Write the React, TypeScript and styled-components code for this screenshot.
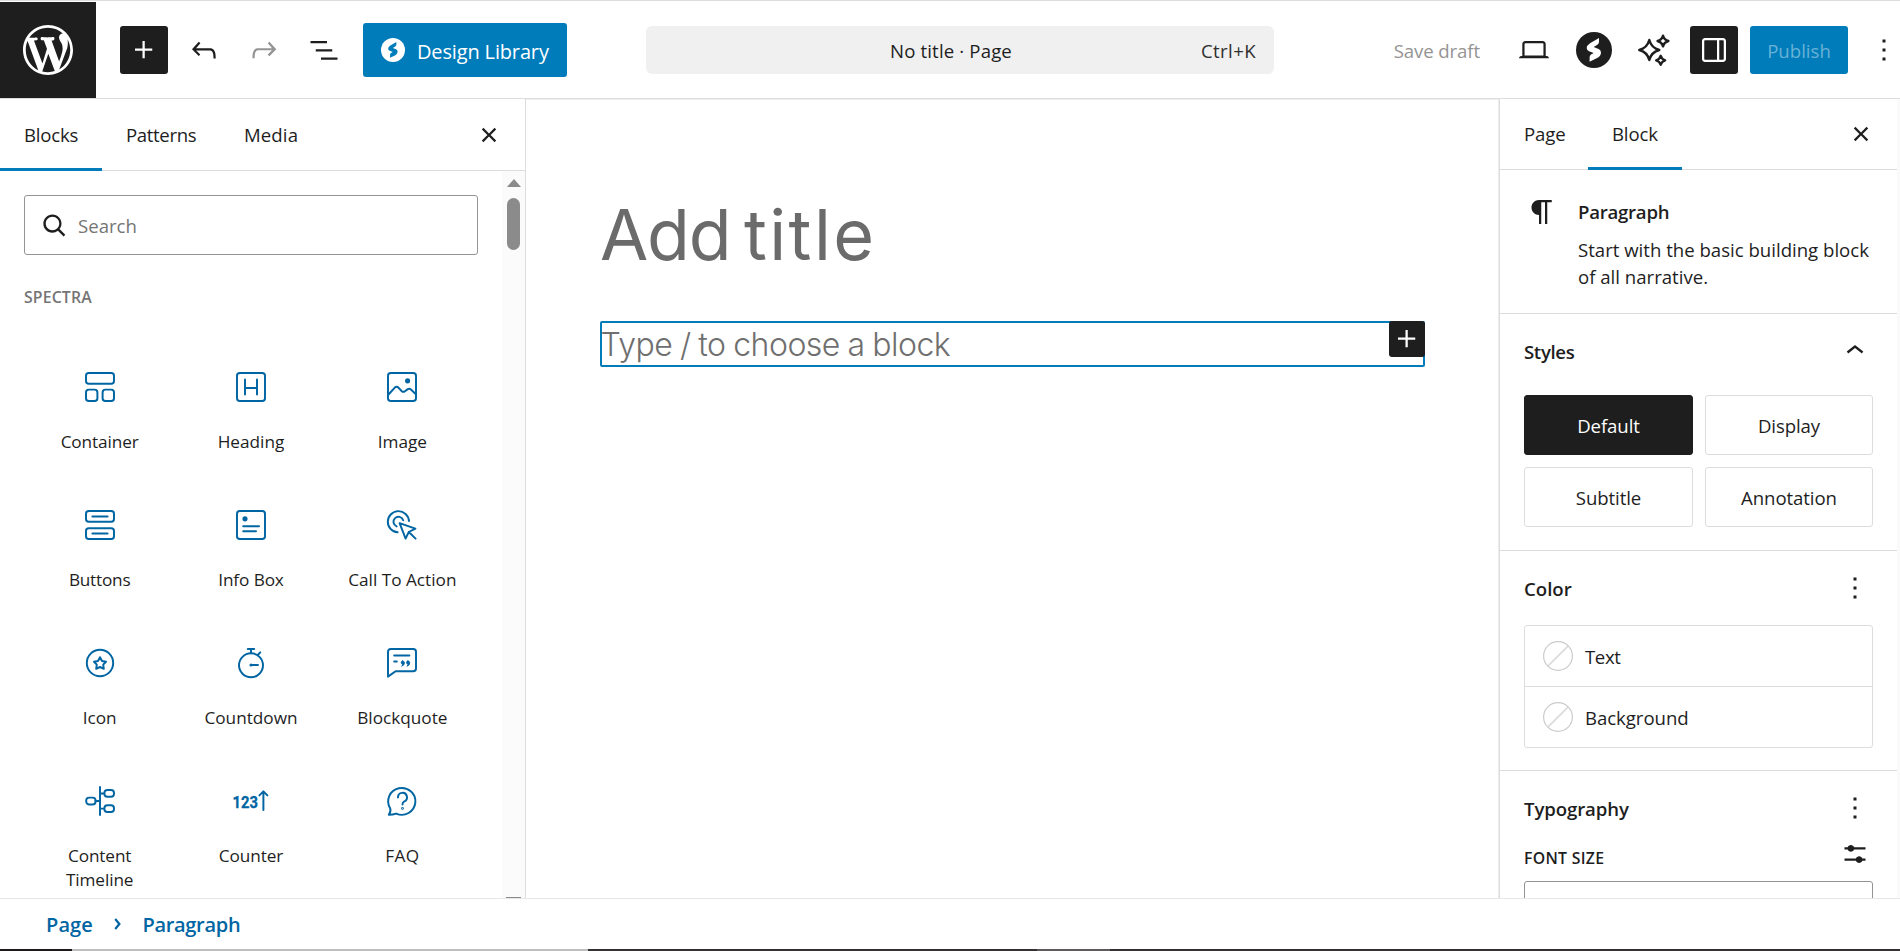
import React from "react";
import styled, { createGlobalStyle } from "styled-components";

const ink = "#1e1e1e";
const accent = "#007cba";
const blockBlue = "#0065a3";
const line = "#dddddd";

const GlobalStyle = createGlobalStyle`
  *, *::before, *::after { box-sizing: border-box; }
  body {
    margin: 0;
    background: #fff;
    color: ${ink};
    font-family: "Open Sans", "Noto Sans", sans-serif;
    font-size: 18.6px;
    overflow: hidden;
  }
  button {
    font: inherit;
    color: inherit;
    background: none;
    border: 0;
    padding: 0;
    margin: 0;
  }
  svg { display: block; flex: none; }
`;

const Screen = styled.div`
  width: 1900px;
  height: 951px;
  display: flex;
  flex-direction: column;
  overflow: hidden;
`;

const Label = styled.span<{ $track?: number; $drop?: number }>`
  letter-spacing: ${(p) => p.$track ?? 0}px;
  padding-top: ${(p) => p.$drop ?? 0}px;
  white-space: nowrap;
`;

/* Header */

const Header = styled.header`
  height: 99px;
  flex: none;
  border-top: 1px solid ${line};
  border-bottom: 1px solid ${line};
  padding-top: 1px;
  display: grid;
  grid-template-columns: 646px 628px 626px;
  align-items: center;
  overflow: hidden;
`;

const HeaderStart = styled.div`
  display: flex;
  align-items: center;
  gap: 12px;
`;

const SiteLogo = styled.div`
  width: 96px;
  height: 96px;
  margin-right: 12px;
  background: ${ink};
  color: #fff;
  display: grid;
  place-items: center;
`;

const ToolButton = styled.button<{ $solid?: boolean; $muted?: boolean }>`
  width: 48px;
  height: 48px;
  flex: none;
  display: grid;
  place-items: center;
  border-radius: 3px;
  background: ${(p) => (p.$solid ? ink : "transparent")};
  color: ${(p) => (p.$solid ? "#fff" : p.$muted ? "#949494" : ink)};
`;

const LibraryButton = styled.button`
  margin-left: 3px;
  width: 204px;
  height: 54px;
  padding-left: 18px;
  border-radius: 3px;
  background: ${accent};
  color: #fff;
  font-size: 20px;
  display: flex;
  align-items: center;
  gap: 12px;
`;

const DocumentBar = styled.div`
  height: 48px;
  border-radius: 6px;
  background: #f0f0f0;
  padding-right: 18px;
  display: grid;
  grid-template-columns: 1fr auto 1fr;
  align-items: center;
`;

const Shortcut = styled.span`
  grid-column: 3;
  justify-self: end;
  padding-top: 1px;
  letter-spacing: 0.4px;
  color: #2f2f2f;
`;

const DocumentName = styled.span`
  grid-column: 2;
  letter-spacing: 0.15px;
`;

const HeaderEnd = styled.div`
  display: flex;
  align-items: center;
  justify-content: flex-end;
  gap: 12px;
  margin-right: -8px;
`;

const SaveDraft = styled.button`
  padding: 1px 18px 0 0;
  color: #949494;
  letter-spacing: -0.1px;
`;

const Publish = styled.button`
  width: 98px;
  height: 48px;
  padding-top: 1px;
  border-radius: 3px;
  background: ${accent};
  color: rgba(255, 255, 255, 0.42);
`;

/* Body */

const Body = styled.div`
  height: 799px;
  flex: none;
  display: flex;
  overflow: hidden;
`;

const Inserter = styled.aside`
  width: 526px;
  flex: none;
  border-right: 1px solid ${line};
  display: flex;
  flex-direction: column;
`;

const TabBar = styled.div<{ $height: number }>`
  height: ${(p) => p.$height}px;
  flex: none;
  display: flex;
  box-shadow: inset 0 -1px 0 ${line};
`;

const Tab = styled.button<{ $active?: boolean; $width: number; $track?: number }>`
  width: ${(p) => p.$width}px;
  padding: 0 0 2px 24px;
  text-align: left;
  letter-spacing: ${(p) => p.$track ?? 0}px;
  box-shadow: ${(p) => (p.$active ? `inset 0 -3px 0 ${accent}` : "none")};
`;

const CloseSlot = styled.button<{ $right: number }>`
  margin: 0 ${(p) => p.$right}px 1px auto;
`;

const InserterBody = styled.div`
  flex: 1;
  min-height: 0;
  display: flex;
`;

const InserterContent = styled.div`
  width: 502px;
  height: 100%;
  padding: 24px 24px 0;
  overflow: hidden;
`;

const SearchField = styled.div`
  width: 454px;
  height: 60px;
  border: 1px solid #949494;
  border-radius: 3px;
  padding: 0 0 0 11px;
  display: flex;
  align-items: center;
  gap: 6px;
  color: #757575;
  letter-spacing: -0.1px;
  svg { color: ${ink}; transform: scaleX(-1); }
`;

const Category = styled.h2`
  margin: 30px 0 0;
  height: 45px;
  font-size: 15.8px;
  line-height: 24px;
  font-weight: 600;
  letter-spacing: 0.15px;
  color: #757575;
`;

const BlockGrid = styled.div`
  display: grid;
  grid-template-columns: repeat(3, 1fr);
  grid-auto-rows: 138px;
`;

const BlockItem = styled.button`
  display: flex;
  flex-direction: column;
  align-items: center;
  padding: 42px 18px 0;
  gap: 28px;
  font-size: 17.2px;
  line-height: 24px;
  color: ${blockBlue};
`;

const BlockName = styled.span<{ $track: number }>`
  color: ${ink};
  text-align: center;
  letter-spacing: ${(p) => p.$track}px;
`;

const ScrollTrack = styled.div`
  width: 23px;
  padding-top: 8px;
  background: #fbfbfb;
  display: flex;
  flex-direction: column;
  align-items: center;
`;

const ScrollUp = styled.div`
  border: 7.5px solid transparent;
  border-top: 0;
  border-bottom: 8px solid #8b8b8b;
`;

const ScrollThumb = styled.div`
  width: 13px;
  height: 52px;
  margin-top: 11px;
  border-radius: 7px;
  background: #8b8b8b;
`;

const ScrollDownEdge = styled.div`
  width: 15px;
  height: 1px;
  margin-top: auto;
  background: #8b8b8b;
`;

/* Canvas */

const Canvas = styled.main`
  flex: 1;
  padding: 85px 73px 0 74px;
  box-shadow: inset 0 1px 0 #efefef;
  font-family: Inter, sans-serif;
`;

const PageTitle = styled.h1`
  margin: 0;
  height: 137px;
  display: flex;
  gap: 13.5px;
  font-size: 70px;
  line-height: 102px;
  font-weight: 390;
  color: #6b6b6b;
`;

const TitleWord = styled.span<{ $track: number }>`
  letter-spacing: ${(p) => p.$track}px;
`;

const ParagraphBlock = styled.div`
  width: 825px;
  height: 46px;
  border: 2px solid ${accent};
  border-radius: 2px;
  position: relative;
  font-size: 32px;
  line-height: 44px;
  font-weight: 290;
  letter-spacing: -0.52px;
  word-spacing: -0.8px;
  text-indent: -1.5px;
  color: #6f6f6f;
  white-space: nowrap;
`;

const BlockAppender = styled.button`
  position: absolute;
  top: -2px;
  right: -2px;
  width: 36px;
  height: 36px;
  border-radius: 3px;
  background: ${ink};
  color: #fff;
`;

/* Settings sidebar */

const Settings = styled.aside`
  width: 402px;
  flex: none;
  border-left: 1px solid #ececec;
  display: flex;
  background: #fafafa;
`;

const SettingsPane = styled.div`
  width: 398px;
  background: #fff;
  border-left: 1px solid ${line};
`;

const BlockCard = styled.section`
  height: 143px;
  padding: 24px 24px 0;
  display: flex;
  gap: 18px;
`;

const CardTitle = styled.h2`
  margin: 0 0 12px;
  padding-top: 4px;
  font-size: 18.6px;
  line-height: 27px;
  font-weight: 600;
  letter-spacing: -0.25px;
`;

const CardText = styled.p`
  margin: -1px 0 0;
  line-height: 27px;
  letter-spacing: 0;
  white-space: nowrap;
`;

const Panel = styled.section<{ $height: number }>`
  height: ${(p) => p.$height}px;
  border-top: 1px solid ${line};
  padding: 0 24px;
`;

const PanelHead = styled.div<{ $height: number; $drop: number }>`
  height: ${(p) => p.$height}px;
  padding-top: ${(p) => p.$drop}px;
  display: flex;
  justify-content: space-between;
  align-items: flex-start;
`;

const PanelTitle = styled.h2<{ $track: number }>`
  margin: 4px 0 0;
  font-size: 18.6px;
  line-height: 30px;
  font-weight: 600;
  letter-spacing: ${(p) => p.$track}px;
`;

const StyleGrid = styled.div`
  width: 349px;
  display: grid;
  grid-template-columns: 169px 168px;
  grid-auto-rows: 60px;
  gap: 12px;
`;

const StyleOption = styled.button<{ $selected?: boolean }>`
  border-radius: 3px;
  border: 1px solid ${(p) => (p.$selected ? ink : line)};
  background: ${(p) => (p.$selected ? ink : "#fff")};
  color: ${(p) => (p.$selected ? "#fff" : ink)};
  letter-spacing: -0.08px;
`;

const ColorList = styled.div`
  width: 349px;
  border: 1px solid ${line};
  border-radius: 3px;
`;

const ColorRow = styled.button`
  width: 100%;
  height: 60px;
  padding-left: 18px;
  display: flex;
  align-items: center;
  gap: 12px;
  letter-spacing: -0.05px;
  & + & {
    height: 61px;
    border-top: 1px solid ${line};
  }
`;

const FieldHead = styled.div`
  height: 45px;
  display: flex;
  justify-content: space-between;
  align-items: flex-start;
  font-size: 15.8px;
  line-height: 24px;
  font-weight: 600;
  letter-spacing: 0.3px;
`;

const FieldName = styled.span`
  padding-top: 10px;
  font-weight: 550;
`;

const SelectField = styled.div`
  width: 349px;
  height: 60px;
  border: 1px solid #949494;
  border-radius: 3px;
`;

/* Footer */

const Footer = styled.footer`
  height: 51px;
  flex: none;
  border-top: 1px solid #e7e7e7;
  padding: 1px 0 0 46px;
  display: flex;
  align-items: center;
  color: ${blockBlue};
  font-size: 20px;
  font-weight: 600;
`;

const Crumb = styled.span<{ $track: number }>`
  letter-spacing: ${(p) => p.$track}px;
  line-height: 48px;
`;

const CrumbChevron = styled.svg`
  margin: 0 21.5px 1px 21px;
`;

const Taskbar = styled.div`
  height: 2px;
  flex: none;
  display: flex;
  background: #333132;
`;

const TaskSegment = styled.div<{ $width: number; $tone: string }>`
  width: ${(p) => p.$width}px;
  background: ${(p) => p.$tone};
`;

/* Icons */

const Glyph = ({ d, size = 36 }: { d: string; size?: number }) => (
  <svg width={size} height={size} viewBox="0 0 24 24" fill="currentColor">
    <path d={d} fillRule="evenodd" />
  </svg>
);

const icons = {
  plus: "M11 12.5V17.5H12.5V12.5H17.5V11H12.5V6H11V11H6V12.5H11Z",
  undo: "M18.3 11.7c-.6-.6-1.4-.9-2.3-.9H6.7l2.9-3.3-1.1-1-4.5 5L8.5 16l1-1-2.7-2.7H16c.5 0 .9.2 1.3.5 1 1 1 3.4 1 4.5v.3h1.5v-.2c0-1.5 0-4.3-1.5-5.7z",
  redo: "M15.6 6.5l-1.1 1 2.9 3.3H8c-.9 0-1.7.3-2.3.9-1.4 1.5-1.4 4.2-1.4 5.6v.2h1.5v-.3c0-1.1 0-3.5 1-4.5.3-.3.7-.5 1.3-.5h9.2L14.5 15l1.1 1.1 4.6-4.6-4.6-5z",
  listView: "M3 6h11v1.5H3V6Zm3.5 5.5h11V13h-11v-1.5ZM21 17H10v1.5h11V17Z",
  close: "M12 13.06l3.712 3.713 1.061-1.06L13.061 12l3.712-3.712-1.06-1.06L12 10.938 8.288 7.227l-1.061 1.06L10.939 12l-3.712 3.712 1.06 1.061L12 13.061z",
  search: "M13 5c-3.3 0-6 2.7-6 6 0 1.4.5 2.7 1.3 3.7l-3.8 3.8 1.1 1.1 3.8-3.8c1 .8 2.3 1.3 3.7 1.3 3.3 0 6-2.7 6-6S16.3 5 13 5zm0 10.5c-2.5 0-4.5-2-4.5-4.5s2-4.5 4.5-4.5 4.5 2 4.5 4.5-2 4.5-4.5 4.5z",
  laptop: "M20.5 16h-.7V8c0-1.1-.9-2-2-2H6.2c-1.1 0-2 .9-2 2v8h-.7c-.8 0-1.5.7-1.5 1.5h20c0-.8-.7-1.5-1.5-1.5zM5.7 8c0-.3.2-.5.5-.5h11.6c.3 0 .5.2.5.5v7.6H5.7V8z",
  drawer: "M18 4H6c-1.1 0-2 .9-2 2v12c0 1.1.9 2 2 2h12c1.1 0 2-.9 2-2V6c0-1.1-.9-2-2-2zm-4 14.5H6c-.3 0-.5-.2-.5-.5V6c0-.3.2-.5.5-.5h8v13zm4.5-.5c0 .3-.2.5-.5.5h-2.5v-13H18c.3 0 .5.2.5.5v12z",
  more: "M13 19h-2v-2h2v2zm0-6h-2v-2h2v2zm0-6h-2V5h2v2z",
  paragraph: "m9.99609 14v-.2251l.00391.0001v6.225h1.5v-14.5h2.5v14.5h1.5v-14.5h3v-1.5h-8.50391c-2.76142 0-5 2.23858-5 5 0 2.7614 2.23858 5 5 5z",
  chevronUp: "M6.5 12.4L12 8l5.5 4.4-.9 1.2L12 10l-4.5 3.6-1-1.2z",
  sliders: "m19 7.5h-7.628c-.3089-.87389-1.1423-1.5-2.122-1.5-.97966 0-1.81309.62611-2.12197 1.5h-2.12803v1.5h2.12803c.30888.87389 1.14231 1.5 2.12197 1.5.9797 0 1.8131-.62611 2.122-1.5h7.628z m0 7.5h-2.128c-.3089-.8739-1.1423-1.5-2.122-1.5s-1.8131.6261-2.122 1.5h-7.628v1.5h7.628c.3089.8739 1.1423 1.5 2.122 1.5s1.8131-.6261 2.122-1.5h2.128z",
};

const WordPressLogo = () => (
  <svg width="50" height="50" viewBox="0 0 20 20" fill="currentColor">
    <path d="M20 10c0-5.51-4.49-10-10-10C4.48 0 0 4.49 0 10c0 5.52 4.48 10 10 10 5.51 0 10-4.48 10-10zM7.78 15.37L4.37 6.22c.55-.02 1.17-.08 1.17-.08.5-.06.44-1.13-.06-1.11 0 0-1.45.11-2.37.11-.18 0-.37 0-.58-.01C4.12 2.69 6.87 1.11 10 1.11c2.33 0 4.45.87 6.05 2.34-.68-.11-1.65.39-1.65 1.58 0 .74.45 1.36.9 2.1.35.61.55 1.36.55 2.46 0 1.49-1.4 5-1.4 5l-3.03-8.37c.54-.02.82-.17.82-.17.5-.05.44-1.25-.06-1.22 0 0-1.44.12-2.38.12-.87 0-2.33-.12-2.33-.12-.5-.03-.56 1.2-.06 1.22l.92.08 1.26 3.41zM17.41 10c.24-.64.74-1.87.43-4.25.7 1.29 1.05 2.71 1.05 4.25 0 3.29-1.73 6.24-4.4 7.78.97-2.59 1.94-5.2 2.92-7.78zM6.1 18.09C3.12 16.65 1.11 13.53 1.11 10c0-1.3.23-2.48.72-3.59C3.25 10.3 4.67 14.2 6.1 18.09zm4.03-6.63l2.58 6.98c-.86.29-1.76.45-2.71.45-.79 0-1.57-.11-2.29-.33.81-2.38 1.62-4.74 2.42-7.1z" />
  </svg>
);

const SpectraMark = ({ size, disc, bolt }: { size: number; disc: string; bolt: string }) => (
  <svg width={size} height={size} viewBox="0 0 36 36">
    <circle cx="18" cy="18" r="18" fill={disc} />
    <path
      fill={bolt}
      d="M23 6L14 11.2Q10.7 13.3 10.7 16.2Q10.9 18.4 13 19.2L17.7 20.9L15 22.6Q13.6 23.6 13.6 25.2V29.8L21.6 25.7Q25 23.6 25 20.4Q24.8 18 22.6 17L17.7 15.1L21.4 12.7Q23 11.6 23 9.9Z"
    />
  </svg>
);

const star4 = (cx: number, cy: number, r: number) => {
  const k = r * 0.21;
  return `M${cx} ${cy - r}Q${cx + k} ${cy - k} ${cx + r} ${cy}Q${cx + k} ${cy + k} ${cx} ${cy + r}Q${cx - k} ${cy + k} ${cx - r} ${cy}Q${cx - k} ${cy - k} ${cx} ${cy - r}Z`;
};

const Sparkles = () => (
  <svg width="36" height="36" viewBox="0 0 36 36" fill="none" stroke={ink} strokeWidth="2.4" strokeLinejoin="round">
    <path d={star4(13.3, 18, 10)} />
    <path d={star4(27, 9, 5.4)} />
    <path d={star4(24.7, 28.3, 4.5)} />
  </svg>
);

const Swatch = () => (
  <svg width="30" height="30" viewBox="0 0 30 30" fill="none">
    <path d="M4.8 25.2L25.2 4.8" stroke="#dcdcdc" strokeWidth="1.8" />
    <circle cx="15" cy="15" r="14.4" stroke="#cbcbcb" strokeWidth="1.2" />
  </svg>
);

const BlockIcon = ({ children }: { children: React.ReactNode }) => (
  <svg
    width="30"
    height="30"
    viewBox="0 0 30 30"
    fill="none"
    stroke="currentColor"
    strokeWidth="1.95"
    strokeLinecap="round"
    strokeLinejoin="round"
    overflow="visible"
  >
    {children}
  </svg>
);

const frame = <rect x="1" y="1" width="28" height="28" rx="2.8" />;

const blocks: { name: string; track: number; icon: React.ReactNode }[] = [
  {
    name: "Container",
    track: -0.1,
    icon: (
      <>
        <rect x="1" y="1" width="28" height="10.8" rx="2.8" />
        <rect x="1" y="17.6" width="11.4" height="11.4" rx="2.8" />
        <rect x="17.6" y="17.6" width="11.4" height="11.4" rx="2.8" />
      </>
    ),
  },
  {
    name: "Heading",
    track: 0,
    icon: (
      <>
        {frame}
        <path d="M9 7.4V22.6M21 7.4V22.6M9 16H21" />
      </>
    ),
  },
  {
    name: "Image",
    track: 0,
    icon: (
      <>
        {frame}
        <circle cx="20.6" cy="8.8" r="1.6" fill="currentColor" />
        <path d="M1.5 22.5L7.6 15.8Q9.6 13.8 11.6 15.8L14.6 19Q16.2 20.6 18 19.2L20.4 17.4Q22.4 16 24.2 17.8L28.6 22" />
      </>
    ),
  },
  {
    name: "Buttons",
    track: -0.2,
    icon: (
      <>
        <rect x="1" y="1" width="28" height="10.8" rx="2.8" />
        <rect x="1" y="18.2" width="28" height="10.8" rx="2.8" />
        <path d="M7.4 6.4H22.6M7.4 23.4H22.6" />
      </>
    ),
  },
  {
    name: "Info Box",
    track: -0.1,
    icon: (
      <>
        {frame}
        <circle cx="9" cy="8.8" r="1.6" fill="currentColor" />
        <path d="M7.2 16.3H23M7.2 21.3H20" />
      </>
    ),
  },
  {
    name: "Call To Action",
    track: 0,
    icon: (
      <>
        <path d="M22 11A10.6 10.6 0 1 0 10.6 22.3M16.2 10.2A5 5 0 1 0 9.6 16.4" />
        <path d="M12.6 13.2L28.4 18.7L21.8 22L18.6 28.6ZM21.8 22L28.6 28.6" />
      </>
    ),
  },
  {
    name: "Icon",
    track: -0.05,
    icon: (
      <>
        <circle cx="15" cy="15" r="13.2" />
        <path d="M15 9.2L17 13L21 13.7L18.2 16.6L18.8 20.8L15 19L11.2 20.8L11.8 16.6L9 13.7L13 13Z" />
      </>
    ),
  },
  {
    name: "Countdown",
    track: 0,
    icon: (
      <>
        <circle cx="15" cy="17.3" r="12" />
        <path d="M11.8 1H18.2M15 1V4.8M21.8 7L24.2 4.4M15.4 17H22" />
        <circle cx="15" cy="17" r="0.6" fill="currentColor" />
      </>
    ),
  },
  {
    name: "Blockquote",
    track: 0,
    icon: (
      <>
        <path d="M1 28.6V3.8Q1 1 3.8 1H26.2Q29 1 29 3.8V20.4Q29 23.2 26.2 23.2H8.6Z" />
        <path d="M7.2 7.4H22.4M7.2 13.4H9.8" />
        <path
          fill="currentColor"
          strokeWidth="1"
          d="M15.6 13A1.5 1.5 0 1 0 15.9 16Q15.8 17.4 14.6 18.2Q17.6 17.4 17.4 14.6Q17.2 13 15.6 13ZM20.9 13A1.5 1.5 0 1 0 21.2 16Q21.1 17.4 19.9 18.2Q22.9 17.4 22.7 14.6Q22.5 13 20.9 13Z"
        />
      </>
    ),
  },
  {
    name: "Content Timeline",
    track: -0.1,
    icon: (
      <>
        <path d="M15 1V29M10.4 15H15M15 7.4H19M15 22.6H19" />
        <rect x="1.2" y="11.6" width="9.4" height="6.8" rx="3" />
        <rect x="19.4" y="4" width="9.6" height="6.8" rx="3" />
        <rect x="19.4" y="19.2" width="9.6" height="6.8" rx="3" />
      </>
    ),
  },
  {
    name: "Counter",
    track: -0.05,
    icon: (
      <>
        <text
          x="-3.4"
          y="22.4"
          fill="currentColor"
          stroke="currentColor"
          strokeWidth="0.3"
          fontFamily="Roboto, sans-serif"
          fontWeight="700"
          fontSize="17"
          textLength="25.4"
          lengthAdjust="spacingAndGlyphs"
        >
          123
        </text>
        <path d="M27.4 24V5.6M23.4 9.4L27.4 5.4L31.4 9.4" />
      </>
    ),
  },
  {
    name: "FAQ",
    track: 0.3,
    icon: (
      <>
        <path d="M1.8 28.8Q4.2 25.4 3.2 22.4A13.6 13.4 0 1 1 9.2 27.6Q5.8 28.8 1.8 28.8Z" />
        <path d="M11 11.4A4.5 4.5 0 1 1 17 15.6Q15.5 16.3 15.5 18.4" />
        <circle cx="15.5" cy="22.4" r="0.4" fill="currentColor" />
      </>
    ),
  },
];

const styleOptions = ["Default", "Display", "Subtitle", "Annotation"];

export default function App() {
  return (
    <Screen>
      <GlobalStyle />
      <Header>
        <HeaderStart>
          <SiteLogo>
            <WordPressLogo />
          </SiteLogo>
          <ToolButton $solid>
            <Glyph d={icons.plus} />
          </ToolButton>
          <ToolButton>
            <Glyph d={icons.undo} />
          </ToolButton>
          <ToolButton $muted>
            <Glyph d={icons.redo} />
          </ToolButton>
          <ToolButton>
            <Glyph d={icons.listView} />
          </ToolButton>
          <LibraryButton>
            <SpectraMark size={24} disc="#fff" bolt={accent} />
            <Label $track={-0.15} $drop={2}>Design Library</Label>
          </LibraryButton>
        </HeaderStart>
        <DocumentBar>
          <DocumentName>No title · Page</DocumentName>
          <Shortcut>Ctrl+K</Shortcut>
        </DocumentBar>
        <HeaderEnd>
          <SaveDraft>Save draft</SaveDraft>
          <ToolButton>
            <Glyph d={icons.laptop} />
          </ToolButton>
          <ToolButton>
            <SpectraMark size={36} disc={ink} bolt="#fff" />
          </ToolButton>
          <ToolButton>
            <Sparkles />
          </ToolButton>
          <ToolButton $solid>
            <Glyph d={icons.drawer} />
          </ToolButton>
          <Publish>Publish</Publish>
          <ToolButton>
            <Glyph d={icons.more} />
          </ToolButton>
        </HeaderEnd>
      </Header>

      <Body>
        <Inserter>
          <TabBar $height={72}>
            <Tab $active $width={102} $track={-0.2}>Blocks</Tab>
            <Tab $width={118} $track={-0.35}>Patterns</Tab>
            <Tab $width={102} $track={0.1}>Media</Tab>
            <CloseSlot $right={18}>
              <Glyph d={icons.close} />
            </CloseSlot>
          </TabBar>
          <InserterBody>
            <InserterContent>
              <SearchField>
                <Glyph d={icons.search} />
                <Label $drop={1}>Search</Label>
              </SearchField>
              <Category>SPECTRA</Category>
              <BlockGrid>
                {blocks.map((b) => (
                  <BlockItem key={b.name}>
                    <BlockIcon>{b.icon}</BlockIcon>
                    <BlockName $track={b.track}>{b.name}</BlockName>
                  </BlockItem>
                ))}
              </BlockGrid>
            </InserterContent>
            <ScrollTrack>
              <ScrollUp />
              <ScrollThumb />
              <ScrollDownEdge />
            </ScrollTrack>
          </InserterBody>
        </Inserter>

        <Canvas>
          <PageTitle>
            <TitleWord $track={-1.2}>Add</TitleWord>
            <TitleWord $track={2.4}>title</TitleWord>
          </PageTitle>
          <ParagraphBlock>
            Type / to choose a block
            <BlockAppender>
              <Glyph d={icons.plus} />
            </BlockAppender>
          </ParagraphBlock>
        </Canvas>

        <Settings>
          <SettingsPane>
            <TabBar $height={71}>
              <Tab $width={88} $track={-0.1}>Page</Tab>
              <Tab $active $width={94} $track={-0.15}>Block</Tab>
              <CloseSlot $right={18}>
                <Glyph d={icons.close} />
              </CloseSlot>
            </TabBar>
            <BlockCard>
              <Glyph d={icons.paragraph} />
              <div>
                <CardTitle>Paragraph</CardTitle>
                <CardText>
                  Start with the basic building block
                  <br />
                  of all narrative.
                </CardText>
              </div>
            </BlockCard>
            <Panel $height={237}>
              <PanelHead $height={81} $drop={19}>
                <PanelTitle $track={-0.35}>Styles</PanelTitle>
                <Glyph d={icons.chevronUp} />
              </PanelHead>
              <StyleGrid>
                {styleOptions.map((name) => (
                  <StyleOption key={name} $selected={name === "Default"}>
                    {name}
                  </StyleOption>
                ))}
              </StyleGrid>
            </Panel>
            <Panel $height={220}>
              <PanelHead $height={74} $drop={19}>
                <PanelTitle $track={0}>Color</PanelTitle>
                <Glyph d={icons.more} />
              </PanelHead>
              <ColorList>
                <ColorRow>
                  <Swatch />
                  <Label $track={-0.4} $drop={1}>Text</Label>
                </ColorRow>
                <ColorRow>
                  <Swatch />
                  <Label $track={-0.05} $drop={1}>Background</Label>
                </ColorRow>
              </ColorList>
            </Panel>
            <Panel $height={180}>
              <PanelHead $height={65} $drop={19}>
                <PanelTitle $track={-0.1}>Typography</PanelTitle>
                <Glyph d={icons.more} />
              </PanelHead>
              <FieldHead>
                <FieldName>FONT SIZE</FieldName>
                <Glyph d={icons.sliders} />
              </FieldHead>
              <SelectField />
            </Panel>
          </SettingsPane>
        </Settings>
      </Body>

      <Footer>
        <Crumb $track={0.1}>Page</Crumb>
        <CrumbChevron width="7" height="12" viewBox="0 0 7 12" fill="none" stroke="currentColor" strokeWidth="2.2">
          <path d="M1.2 1L5.4 6L1.2 11" />
        </CrumbChevron>
        <Crumb $track={-0.3}>Paragraph</Crumb>
      </Footer>
      <Taskbar>
        <TaskSegment $width={72} $tone="#1b191a" />
        <TaskSegment $width={516} $tone="#bfbfbf" />
        <TaskSegment $width={449} $tone="#333132" />
        <TaskSegment $width={73} $tone="#5c5a5b" />
      </Taskbar>
    </Screen>
  );
}
